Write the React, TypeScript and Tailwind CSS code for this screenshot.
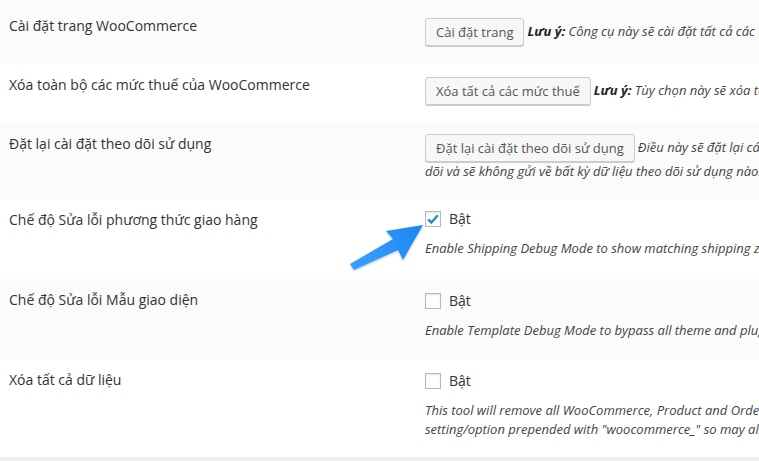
import React from "react";

const font = { fontFamily: '"Open Sans", "Noto Sans", sans-serif' };

function Btn({ children }: { children: React.ReactNode }) {
  return (
    <span className="inline-flex h-[28px] items-center rounded-[3px] border border-[#cccccc] bg-[#f7f7f7] px-[10px] pb-[1px] text-[13px] leading-[26px] text-[#555555] shadow-[0_1px_0_#cccccc] whitespace-nowrap">
      {children}
    </span>
  );
}

function Check({ checked }: { checked?: boolean }) {
  return (
    <span className="flex h-[16px] w-[16px] items-center justify-center border border-[#b4b9be] bg-white shadow-[inset_0_1px_2px_rgba(0,0,0,0.1)]">
      {checked && (
        <svg width="14" height="14" viewBox="0 0 14 14">
          <path d="M2.2 7.4 L5.4 10.6 L11.8 3.2" fill="none" stroke="#1e8cbe" strokeWidth="2.4" strokeLinejoin="miter" />
        </svg>
      )}
    </span>
  );
}

function Row({
  bg,
  h,
  label,
  labelTop,
  children,
  contentTop,
}: {
  bg: string;
  h: string;
  label: string;
  labelTop: string;
  children: React.ReactNode;
  contentTop: string;
}) {
  return (
    <div className={`flex ${bg} ${h}`}>
      <div className={`w-[425px] shrink-0 pl-[9px] text-[14px] leading-[20px] text-[#333333] ${labelTop}`}>{label}</div>
      <div className={`whitespace-nowrap ${contentTop}`}>{children}</div>
    </div>
  );
}

export default function App() {
  return (
    <div className="relative h-[461px] w-[759px] overflow-hidden bg-white" style={font}>
      <Row bg="bg-[#fbfbfb]" h="h-[63px]" label="Cài đặt trang WooCommerce" labelTop="pt-[16px]" contentTop="pt-[18px]">
        <div className="flex items-center">
          <Btn>Cài đặt trang</Btn>
          <span className="ml-[3px] text-[13px] italic text-[#444444]">
            <b className="font-bold text-[#222222]">Lưu ý:</b> Công cụ này sẽ cài đặt tất cả các trang WooCommerce bị thiếu. Các trang đã được xác định sẽ không bị thay thế.
          </span>
        </div>
      </Row>
      <Row bg="bg-white" h="h-[59px]" label="Xóa toàn bộ các mức thuế của WooCommerce" labelTop="pt-[12px]" contentTop="pt-[14px]">
        <div className="flex items-center">
          <Btn>Xóa tất cả các mức thuế</Btn>
          <span className="ml-[3px] text-[13px] italic text-[#444444]">
            <b className="font-bold text-[#222222]">Lưu ý:</b> Tùy chọn này sẽ xóa toàn bộ các mức thuế của bạn, hãy cẩn thận.
          </span>
        </div>
      </Row>
      <Row bg="bg-[#fbfbfb]" h="h-[78px]" label="Đặt lại cài đặt theo dõi sử dụng" labelTop="pt-[12px]" contentTop="pt-[12px]">
        <div className="flex items-center">
          <Btn>Đặt lại cài đặt theo dõi sử dụng</Btn>
          <span className="ml-[3px] text-[13px] italic text-[#444444]">
            Điều này sẽ đặt lại các cài đặt theo dõi sử dụng của bạn, khiến nó hiển thị lại biểu ngữ tham gia theo
          </span>
        </div>
        <div className="text-[13px] italic leading-[19px] text-[#444444]">dõi và sẽ không gửi về bất kỳ dữ liệu theo dõi sử dụng nào.</div>
      </Row>
      <Row bg="bg-white" h="h-[79px]" label="Chế độ Sửa lỗi phương thức giao hàng" labelTop="pt-[10px]" contentTop="pt-[11px]">
        <div className="flex h-[16px] items-center gap-[8px]">
          <Check checked />
          <span className="text-[14px] leading-[16px] text-[#333333]">Bật</span>
        </div>
        <div className="mt-[12px] text-[13px] italic leading-[19px] text-[#444444]">
          Enable Shipping Debug Mode to show matching shipping zones and to bypass shipping rate cache.
        </div>
      </Row>
      <Row bg="bg-[#fbfbfb]" h="h-[80px]" label="Chế độ Sửa lỗi Mẫu giao diện" labelTop="pt-[11px]" contentTop="pt-[14px]">
        <div className="flex h-[16px] items-center gap-[8px]">
          <Check />
          <span className="text-[14px] leading-[16px] text-[#333333]">Bật</span>
        </div>
        <div className="mt-[12px] text-[13px] italic leading-[19px] text-[#444444]">
          Enable Template Debug Mode to bypass all theme and plugin template overrides for logged-in administrators.
        </div>
      </Row>
      <Row bg="bg-white" h="h-[98px]" label="Xóa tất cả dữ liệu" labelTop="pt-[11px]" contentTop="pt-[14px]">
        <div className="flex h-[16px] items-center gap-[8px]">
          <Check />
          <span className="text-[14px] leading-[16px] text-[#333333]">Bật</span>
        </div>
        <div className="mt-[12px] text-[13px] italic leading-[19px] text-[#444444]">
          This tool will remove all WooCommerce, Product and Order data when using the "Delete" link on the plugins screen. It will also remove any
          <br />
          setting/option prepended with "woocommerce_" so may also affect installed WooCommerce Extensions.
        </div>
      </Row>
      <div className="h-[4px] bg-[#eeeeee]" />

      <svg className="pointer-events-none absolute left-0 top-0" width="759" height="461" viewBox="0 0 759 461">
        <defs>
          <linearGradient id="ag" x1="352" y1="268" x2="423" y2="225" gradientUnits="userSpaceOnUse">
            <stop offset="0" stopColor="#3aa0ff" />
            <stop offset="1" stopColor="#1c86f2" />
          </linearGradient>
          <filter id="sh" x="-20%" y="-20%" width="140%" height="140%">
            <feDropShadow dx="0" dy="1" stdDeviation="1" floodColor="#000" floodOpacity="0.25" />
          </filter>
        </defs>
        <polygon
          points="423,225 386,231 393,239 350,264 354,270 398,250 403,260"
          fill="url(#ag)"
          filter="url(#sh)"
        />
      </svg>
    </div>
  );
}
